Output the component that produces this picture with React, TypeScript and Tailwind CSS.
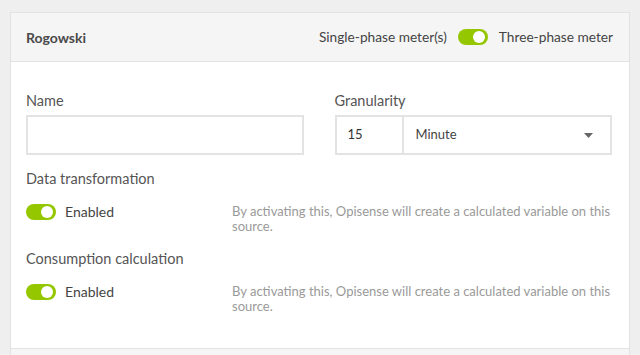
import React from 'react';

function Toggle() {
  return (
    <div className="relative h-4 w-[30px] shrink-0 rounded-full bg-[#94c700]">
      <div className="absolute right-[3px] top-[2px] h-3 w-3 rounded-full bg-white" />
    </div>
  );
}

function OptionRow({ label }: { label: string }) {
  return (
    <div className="flex flex-col">
      <div className="h-5 text-[14.5px] leading-5 text-[#555]">{label}</div>
      <div className="mt-[15px] flex items-start">
        <div className="flex w-[206px] items-center gap-[9px]">
          <Toggle />
          <span className="text-[14px] leading-4 text-[#444]">Enabled</span>
        </div>
        <p className="w-[380px] text-[13px] leading-[15px] text-[#9a9a9a]">
          By activating this, Opisense will create a calculated variable on this source.
        </p>
      </div>
    </div>
  );
}

export default function App() {
  return (
    <div className="h-[355px] w-[640px] overflow-hidden bg-[#efefef] pl-[10px] pr-[10px] pt-3 font-['Lato',sans-serif]">
      <div className="w-[620px] border border-[#e2e2e2] bg-white">
        {/* Header */}
        <div className="flex h-[49px] items-center justify-between border-b border-[#e2e2e2] bg-[#f5f5f5] pl-[15px] pr-[16px]">
          <h2 className="text-[14px] font-bold text-[#4a4a4a]">Rogowski</h2>
          <div className="flex items-center gap-[11px] text-[13.7px] text-[#444]">
            <span>Single-phase meter(s)</span>
            <Toggle />
            <span>Three-phase meter</span>
          </div>
        </div>

        {/* Body */}
        <div className="pb-[34px] pl-[15px] pr-[17px] pt-[29px]">
          <div className="grid grid-cols-2 gap-[31px]">
            <div>
              <div className="h-5 text-[14.5px] leading-5 text-[#555]">Name</div>
              <input className="mt-1 h-10 w-full border-2 border-[#e3e3e3] bg-white px-3 text-[13px] outline-none" />
            </div>
            <div>
              <div className="h-5 text-[14.5px] leading-5 text-[#555]">Granularity</div>
              <div className="mt-1 flex h-10 border-2 border-[#e3e3e3]">
                <div className="flex w-[67px] items-center border-r-2 border-[#e3e3e3] pl-[11px] text-[13px] text-[#333]">
                  15
                </div>
                <div className="flex flex-1 items-center justify-between pl-3 pr-[17px] text-[13px] text-[#444]">
                  <span>Minute</span>
                  <svg width="9" height="5" viewBox="0 0 9 5">
                    <path d="M0 0h9L4.5 5z" fill="#666" />
                  </svg>
                </div>
              </div>
            </div>
          </div>

          <div className="mt-[14px] flex flex-col gap-[15px]">
            <OptionRow label="Data transformation" />
            <OptionRow label="Consumption calculation" />
          </div>
        </div>

        {/* Footer */}
        <div className="h-10 border-t border-[#e2e2e2] bg-[#f5f5f5]" />
      </div>
    </div>
  );
}
